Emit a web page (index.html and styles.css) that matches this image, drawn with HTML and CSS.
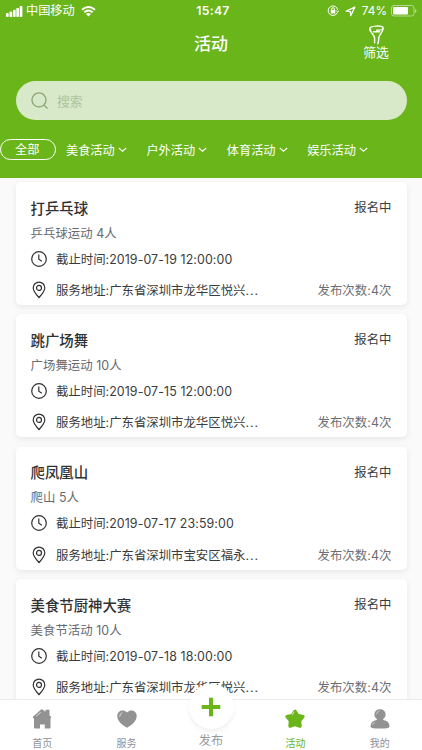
FILE: index.html
```html
<!DOCTYPE html>
<html lang="zh-CN">
<head>
<meta charset="utf-8">
<title>活动</title>
<link rel="stylesheet" href="styles.css">
</head>
<body>
<svg class="defs" width="0" height="0">
  <symbol id="clock" viewBox="0 0 16 16"><circle cx="8" cy="8" r="7.300"/><path d="M7.800 3.600v4.600l3 2"/></symbol>
  <symbol id="pin" viewBox="0 0 14 18"><path d="M7 16.600C4.200 13.400 1.200 10 1.200 6.900a5.800 5.800 0 0 1 11.600 0C12.800 10 9.800 13.400 7 16.600z"/><circle cx="7" cy="6.900" r="2.500"/></symbol>
  <symbol id="chevron" viewBox="0 0 9 6"><path d="M.8 1l3.700 3.200L8.200 1"/></symbol>
</svg>
<header class="header">
  <div class="status">
    <div class="carrier">
      <svg class="signal" width="17" height="11" viewBox="0 0 17 11"><rect x="0" y="7" width="2.700" height="4" rx=".8"/><rect x="3.500" y="5.500" width="2.700" height="5.500" rx=".8"/><rect x="7" y="3.800" width="2.700" height="7.200" rx=".8"/><rect x="10.300" y="2" width="2.700" height="9" rx=".8"/><rect x="13.700" y="0" width="2.700" height="11" rx=".8"/></svg>
      <span>中国移动</span>
      <svg class="wifi" width="15" height="11" viewBox="0 0 15 11"><path d="M1 3.700Q7.500-1.800 14 3.700M3.300 6.200Q7.500 2.700 11.700 6.200"/><path class="dot" d="M5 8Q7.500 5.900 10 8L7.500 10.500z"/></svg>
    </div>
    <div class="time">15:47</div>
    <div class="battery">
      <svg width="12" height="12" viewBox="0 0 12 12"><path class="line" d="M10.400 7.500A4.800 4.800 0 1 1 10.700 5"/><path class="line" d="M9.300 5.700l1.400 1.300 1.200-1.500"/><rect x="3.700" y="5" width="4.600" height="3.500" rx=".5"/><path class="line" d="M4.700 5V4a1.300 1.300 0 0 1 2.600 0v1"/></svg>
      <svg width="11" height="11" viewBox="0 0 11 11"><path class="line arrow" d="M9.800 1.100L1.300 5.100l4 .5.4 4z"/></svg>
      <span>74%</span>
      <svg class="cell" width="26" height="12" viewBox="0 0 26 12"><rect class="shell" x=".5" y=".5" width="22.500" height="10.500" rx="2.500"/><rect x="2" y="2" width="15" height="7.500" rx="1"/><path class="cap" d="M24 4v4q1.500-.5 1.500-2T24 4z"/></svg>
    </div>
  </div>
  <div class="titlebar">
    <h1>活动</h1>
    <div class="filter">
      <svg width="17" height="20" viewBox="0 0 17 20"><path d="M2.600 5.200C.2 2.500 4.200 1.300 8 1.100c4-.2 7 .4 7.200 2 .1 1.900-3.600 2-6.500 2.200"/><path d="M1.700 4.500c.9 3 4.500 5.500 4.900 8.300v5M15.200 3.500c-.4 3.100-3.700 6-4.300 8.800-.6 2 .2 3.800-1.100 6.500M5.500 6.700h6"/></svg>
      <span>筛选</span>
    </div>
  </div>
  <div class="search">
    <svg width="18" height="18" viewBox="0 0 18 18"><circle cx="8" cy="7.900" r="7"/><path d="M12.800 13l3.700 3.400"/></svg>
    <span>搜索</span>
  </div>
  <nav class="cats">
    <div class="all">全部</div>
    <div class="cat">美食活动<svg><use href="#chevron"/></svg></div>
    <div class="cat">户外活动<svg><use href="#chevron"/></svg></div>
    <div class="cat">体育活动<svg><use href="#chevron"/></svg></div>
    <div class="cat">娱乐活动<svg><use href="#chevron"/></svg></div>
  </nav>
</header>
<main class="list">
  <article class="card">
    <div class="row head"><h2>打乒乓球</h2><span>报名中</span></div>
    <div class="sub">乒乓球运动 4人</div>
    <div class="row when"><svg class="clock"><use href="#clock"/></svg><span>截止时间:<b>2019-07-19 12:00:00</b></span></div>
    <div class="row where"><svg class="pin"><use href="#pin"/></svg><span>服务地址:广东省深圳市龙华区悦兴<i>...</i></span><em>发布次数:4次</em></div>
  </article>
  <article class="card">
    <div class="row head"><h2>跳广场舞</h2><span>报名中</span></div>
    <div class="sub">广场舞运动 10人</div>
    <div class="row when"><svg class="clock"><use href="#clock"/></svg><span>截止时间:<b>2019-07-15 12:00:00</b></span></div>
    <div class="row where"><svg class="pin"><use href="#pin"/></svg><span>服务地址:广东省深圳市龙华区悦兴<i>...</i></span><em>发布次数:4次</em></div>
  </article>
  <article class="card">
    <div class="row head"><h2>爬凤凰山</h2><span>报名中</span></div>
    <div class="sub">爬山 5人</div>
    <div class="row when"><svg class="clock"><use href="#clock"/></svg><span>截止时间:<b>2019-07-17 23:59:00</b></span></div>
    <div class="row where"><svg class="pin"><use href="#pin"/></svg><span>服务地址:广东省深圳市宝安区福永<i>...</i></span><em>发布次数:4次</em></div>
  </article>
  <article class="card">
    <div class="row head"><h2>美食节厨神大赛</h2><span>报名中</span></div>
    <div class="sub">美食节活动 10人</div>
    <div class="row when"><svg class="clock"><use href="#clock"/></svg><span>截止时间:<b>2019-07-18 18:00:00</b></span></div>
    <div class="row where"><svg class="pin"><use href="#pin"/></svg><span>服务地址:广东省深圳市龙华区悦兴<i>...</i></span><em>发布次数:4次</em></div>
  </article>
</main>
<nav class="tabs">
  <div class="tab"><svg width="20" height="20" viewBox="0 0 20 20"><path d="M1.200 7.500L8.800.7q1-.8 2 0l2.700 2V.8h4v5.600l1.300 1.100q.6.700 0 1.500l-.3.400V18.500q0 1-1 1h-4.700V15.500h-4.800v4H3q-1 0-1-1V9.500l-.8-.5q-.7-.8 0-1.500z"/><path class="shine" d="M4.500 6.800l4-3.200"/></svg><span>首页</span></div>
  <div class="tab"><svg width="20" height="20" viewBox="0 0 20 20"><path d="M10 18.800C4.500 15.400.3 12 .3 6.900.3 1.700 6.700-.3 10 3.600 13.300-.3 19.700 1.700 19.700 6.900 19.700 12 15.500 15.400 10 18.800z"/><path class="shine" d="M2.700 7.300Q2.700 4.600 5 3.700"/></svg><span>服务</span></div>
  <div class="tab publish"><div class="plus"><svg width="20" height="20" viewBox="0 0 20 20"><path d="M10 .7v18.600M.7 10h18.600"/></svg></div><span>发布</span></div>
  <div class="tab active"><svg width="20" height="20" viewBox="0 0 20 20"><path d="M8.500 1.500q1.500-2 3 0l2.200 3.600 4.700 1q2 .7.900 2.400l-3 3.700.4 4.900q-.1 2.200-2.200 1.700L10 17.300l-4.500 1.500q-2.100.5-2.200-1.700l.4-4.900-3-3.700Q-.4 6.800 1.600 6.100l4.700-1z"/><path class="shine" d="M7.200 6l1.700-3"/></svg><span>活动</span></div>
  <div class="tab"><svg width="20" height="20" viewBox="0 0 20 20"><path d="M10 .2a5.300 5.300 0 0 1 3.200 9.700v1.200q6.300 1 6.300 6.300 0 2.200-9.500 2.200T.5 17.400q0-5.300 6.300-6.300V9.900A5.300 5.300 0 0 1 10 .2z"/><path class="shine thin" d="M6.500 5Q6.800 2.800 9 2.200M2.500 15.500q.5-1.700 2-2.300"/></svg><span>我的</span></div>
</nav>
</body>
</html>
```
FILE: styles.css
```css
* { box-sizing: border-box; }
body {
  margin: 0;
  width: 422px;
  height: 750px;
  overflow: hidden;
  display: flex;
  flex-direction: column;
  background: #fafafa;
  color: #3a3b3d;
  font-family: Inter, "Noto Sans CJK SC", sans-serif;
  font-size: 12.400px;
}
svg { flex: none; display: block; }
.defs { position: absolute; }
h1, h2 { margin: 0; font-weight: 500; }
b, em, i { font-weight: 400; font-style: normal; }

.header { flex: none; height: 177.500px; background: #69b51a; color: #fff; }
.status {
  display: grid;
  grid-template-columns: 1fr auto 1fr;
  align-items: center;
  height: 22px;
  padding: 0 6px;
  font-size: 12.200px;
  line-height: 22px;
}
.status svg { fill: #fff; }
.carrier { display: flex; align-items: center; }
.carrier span { margin-left: 3px; }
.wifi { margin-left: 6.500px; }
.status .wifi path { fill: none; stroke: #fff; stroke-width: 1.900; }
.status .wifi .dot { fill: #fff; stroke: none; }
.time { font-weight: 600; letter-spacing: .3px; padding-left: 4px; }
.battery { display: flex; align-items: center; justify-content: flex-end; margin-right: -1px; }
.battery span { margin: 0 4px 0 6px; font-size: 11.800px; }
.battery svg + svg { margin-left: 6px; }
.battery .line { fill: none; stroke: #fff; stroke-width: 1; }
.battery .arrow { stroke-width: 1.300; stroke-linejoin: round; }
.battery .shell { fill: none; stroke: #fff; opacity: .5; }
.battery .cap { opacity: .5; }
.titlebar {
  display: grid;
  grid-template-columns: 1fr auto 1fr;
  height: 59px;
}
.titlebar h1 { grid-column: 2; font-size: 17px; line-height: 20px; padding-top: 12px; }
.filter {
  justify-self: end;
  display: flex;
  flex-direction: column;
  align-items: center;
  width: 26px;
  margin: 3px 33px 0 0;
  font-size: 12.800px;
  line-height: 16px;
}
.filter svg { fill: none; stroke: #fff; stroke-width: 1.400; stroke-linecap: round; }
.filter span { white-space: nowrap; }
.search {
  display: flex;
  align-items: center;
  height: 39px;
  margin: 0 15.500px;
  padding-left: 15px;
  border-radius: 20px;
  background: #d7e9c8;
  color: #adc3a0;
  font-size: 12.800px;
}
.search svg { fill: none; stroke: #8ba47a; stroke-width: 1.300; margin-right: 8.500px; }
.cats { display: flex; align-items: center; margin-top: 19px; height: 21px; font-size: 12.200px; }
.all {
  width: 56px;
  height: 21px;
  border: 1px solid #fff;
  border-radius: 11px;
  line-height: 20px;
  padding-left: 14px;
  margin-right: 10px;
}
.cat { display: flex; align-items: center; width: 80.400px; }
.cat svg { width: 9px; height: 6px; margin-left: 3px; fill: none; stroke: #fff; stroke-width: 1.100; }

.list { flex: 1; min-height: 0; overflow: hidden; padding: 4.500px 15.500px 0; display: flex; flex-direction: column; gap: 9.400px; }
.card {
  flex: none;
  height: 123px;
  padding: 16.500px 15px 0;
  background: #fff;
  border-radius: 5px;
  box-shadow: 0 2px 6px rgba(0, 0, 0, .08);
}
.row { display: flex; align-items: center; }
.head { height: 20px; justify-content: space-between; }
.head h2 { font-size: 14.400px; line-height: 20px; color: #303133; }
.head span { line-height: 20px; margin-top: -1px; }
.sub { margin-top: 5.200px; line-height: 20px; color: #686a6f; letter-spacing: .05px; }
.when { margin-top: 5px; height: 20px; }
.when b { letter-spacing: .1px; }
.where { margin-top: 11.200px; height: 20px; }
.where i { letter-spacing: .900px; }
.where em { margin-left: auto; color: #6c6e74; letter-spacing: .08px; }
.clock, .pin { fill: none; stroke: #303133; stroke-width: 1.200; }
.clock { width: 16px; height: 16px; margin-right: 9.500px; }
.pin { width: 14px; height: 18px; margin: 0 10.500px 0 1px; }

.tabs {
  flex: none;
  display: flex;
  height: 51px;
  border-top: 1px solid #ebebeb;
  background: #fff;
  color: #8e919c;
  font-size: 10px;
}
.tab { flex: 1; display: flex; flex-direction: column; align-items: center; padding-top: 9px; position: relative; }
.tab svg { fill: #929292; }
.tab span { line-height: 14px; margin-top: 6.500px; }
.tab .shine { fill: none; stroke: #fff; stroke-width: .8; stroke-linecap: round; opacity: .85; }
.tab .thin { stroke-width: .6; }
.active { color: #69b51a; }
.active svg { fill: #69b51a; }
.publish { font-size: 12.200px; padding-top: 27px; color: #999; }
.plus {
  position: absolute;
  top: -16px;
  width: 45px;
  height: 45px;
  border-radius: 50%;
  background: #fff;
  display: flex;
  align-items: center;
  justify-content: center;
  box-shadow: 0 3px 4px rgba(0, 0, 0, .06);
}
.plus svg { stroke: #69b51a; stroke-width: 4; }
```
